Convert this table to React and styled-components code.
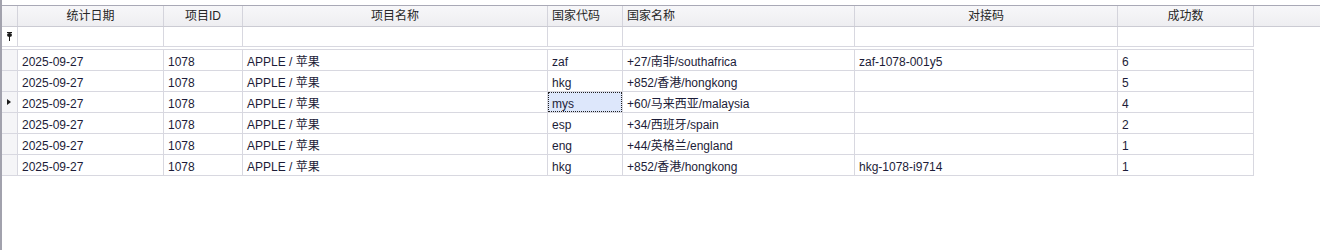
import styled, { createGlobalStyle } from "styled-components";

const GlobalStyle = createGlobalStyle`
    html, body {
        margin: 0;
        padding: 0;
        background: #ffffff;
    }
    body {
        font-family: "Liberation Sans", "Noto Sans CJK SC", sans-serif;
        font-size: 12px;
    }
`

const columns = [
    { key: "date", title: "统计日期", width: 146, align: "center" },
    { key: "pid", title: "项目ID", width: 79, align: "center" },
    { key: "pname", title: "项目名称", width: 305, align: "center" },
    { key: "code", title: "国家代码", width: 75, align: "left" },
    { key: "country", title: "国家名称", width: 232, align: "left" },
    { key: "link", title: "对接码", width: 263, align: "center" },
    { key: "count", title: "成功数", width: 136, align: "center" },
]

const rows = [
    { date: "2025-09-27", pid: "1078", pname: "APPLE / 苹果", code: "zaf", country: "+27/南非/southafrica", link: "zaf-1078-001y5", count: "6" },
    { date: "2025-09-27", pid: "1078", pname: "APPLE / 苹果", code: "hkg", country: "+852/香港/hongkong", link: "", count: "5" },
    { date: "2025-09-27", pid: "1078", pname: "APPLE / 苹果", code: "mys", country: "+60/马来西亚/malaysia", link: "", count: "4" },
    { date: "2025-09-27", pid: "1078", pname: "APPLE / 苹果", code: "esp", country: "+34/西班牙/spain", link: "", count: "2" },
    { date: "2025-09-27", pid: "1078", pname: "APPLE / 苹果", code: "eng", country: "+44/英格兰/england", link: "", count: "1" },
    { date: "2025-09-27", pid: "1078", pname: "APPLE / 苹果", code: "hkg", country: "+852/香港/hongkong", link: "hkg-1078-i9714", count: "1" },
]

const currentRow = 2

export default function App() {
    return (
        <>
            <GlobalStyle />
            <Page>
                <HeaderRow>
                    <HeaderCell $width={16} />
                    {columns.map((c) =>
                        <HeaderCell key={c.key} $width={c.width} $align={c.align}>
                            {c.title}
                        </HeaderCell>)}
                </HeaderRow>

                <FilterRow>
                    <FilterIndicator>
                        <svg width="7" height="9" viewBox="0 0 7 9">
                            <rect x="1" y="0" width="5" height="1" fill="#1a1a1a" />
                            <ellipse cx="3.5" cy="3" rx="2.5" ry="2" fill="#1a1a1a" />
                            <rect x="3" y="4" width="1" height="5" fill="#1a1a1a" />
                        </svg>
                    </FilterIndicator>
                    {columns.map((c) =>
                        <FilterCell key={c.key} $width={c.width} />)}
                </FilterRow>

                <Body>
                    {rows.map((r, i) =>
                        <DataRow key={i}>
                            <RowIndicator>
                                {i === currentRow && <Arrow />}
                            </RowIndicator>
                            {columns.map((c) =>
                                <DataCell key={c.key} $width={c.width}>
                                    {i === currentRow && c.key === "code"
                                        ? <Focused>{r[c.key]}</Focused>
                                        : r[c.key]}
                                </DataCell>)}
                        </DataRow>)}
                </Body>
            </Page>
        </>
    )
}

const Page = styled.div`
    height: 250px;
    box-sizing: border-box;
    border-left: 2px solid #a2a2ad;
    padding-top: 5px;
    color: #1c1c38;
`

const HeaderRow = styled.div`
    display: flex;
    height: 22px;
    box-sizing: border-box;
    border-top: 1px solid #a9a9b6;
    border-bottom: 1px solid #cbcbd3;
    background: linear-gradient(#f7f7f9, #eeeef1);
`

const HeaderCell = styled.div`
    flex: 0 0 ${(p) => p.$width}px;
    box-sizing: border-box;
    border-right: 1px solid #d4d4dc;
    padding: 0 4px;
    line-height: 20px;
    text-align: ${(p) => p.$align || "center"};
    color: #262626;
    white-space: nowrap;
`

const FilterRow = styled.div`
    display: flex;
    height: 20px;
`

const FilterIndicator = styled.div`
    flex: 0 0 16px;
    box-sizing: border-box;
    border-right: 1px solid #d8d8e0;
    border-bottom: 1px solid #d8d8e0;
    display: flex;
    align-items: center;
    justify-content: center;
    padding-bottom: 1px;
`

const FilterCell = styled.div`
    flex: 0 0 ${(p) => p.$width}px;
    box-sizing: border-box;
    border-right: 1px solid #d8d8e0;
    border-bottom: 1px solid #d8d8e0;
`

const Body = styled.div`
    margin-top: 2px;
    width: 1252px;
    border-top: 1px solid #d8d8e0;
`

const DataRow = styled.div`
    display: flex;
    height: 21px;
    box-sizing: border-box;
    border-bottom: 1px solid #d8d8e0;
`

const RowIndicator = styled.div`
    flex: 0 0 16px;
    box-sizing: border-box;
    border-right: 1px solid #d8d8e0;
    background: #f5f5f7;
    display: flex;
    align-items: center;
    padding-left: 5px;
`

const Arrow = styled.div`
    width: 0;
    height: 0;
    border-top: 3.5px solid transparent;
    border-bottom: 3.5px solid transparent;
    border-left: 4px solid #1a1a1a;
`

const DataCell = styled.div`
    flex: 0 0 ${(p) => p.$width}px;
    box-sizing: border-box;
    border-right: 1px solid #d8d8e0;
    padding: 2px 4px 0;
    height: 20px;
    line-height: 21px;
    white-space: nowrap;
    overflow: hidden;
`

const Focused = styled.div`
    height: 20px;
    box-sizing: border-box;
    margin: -2px -4px 0;
    padding: 2px 3px 0;
    line-height: 19px;
    background: #dde7fb;
    border: 1px dotted #202020;
`
